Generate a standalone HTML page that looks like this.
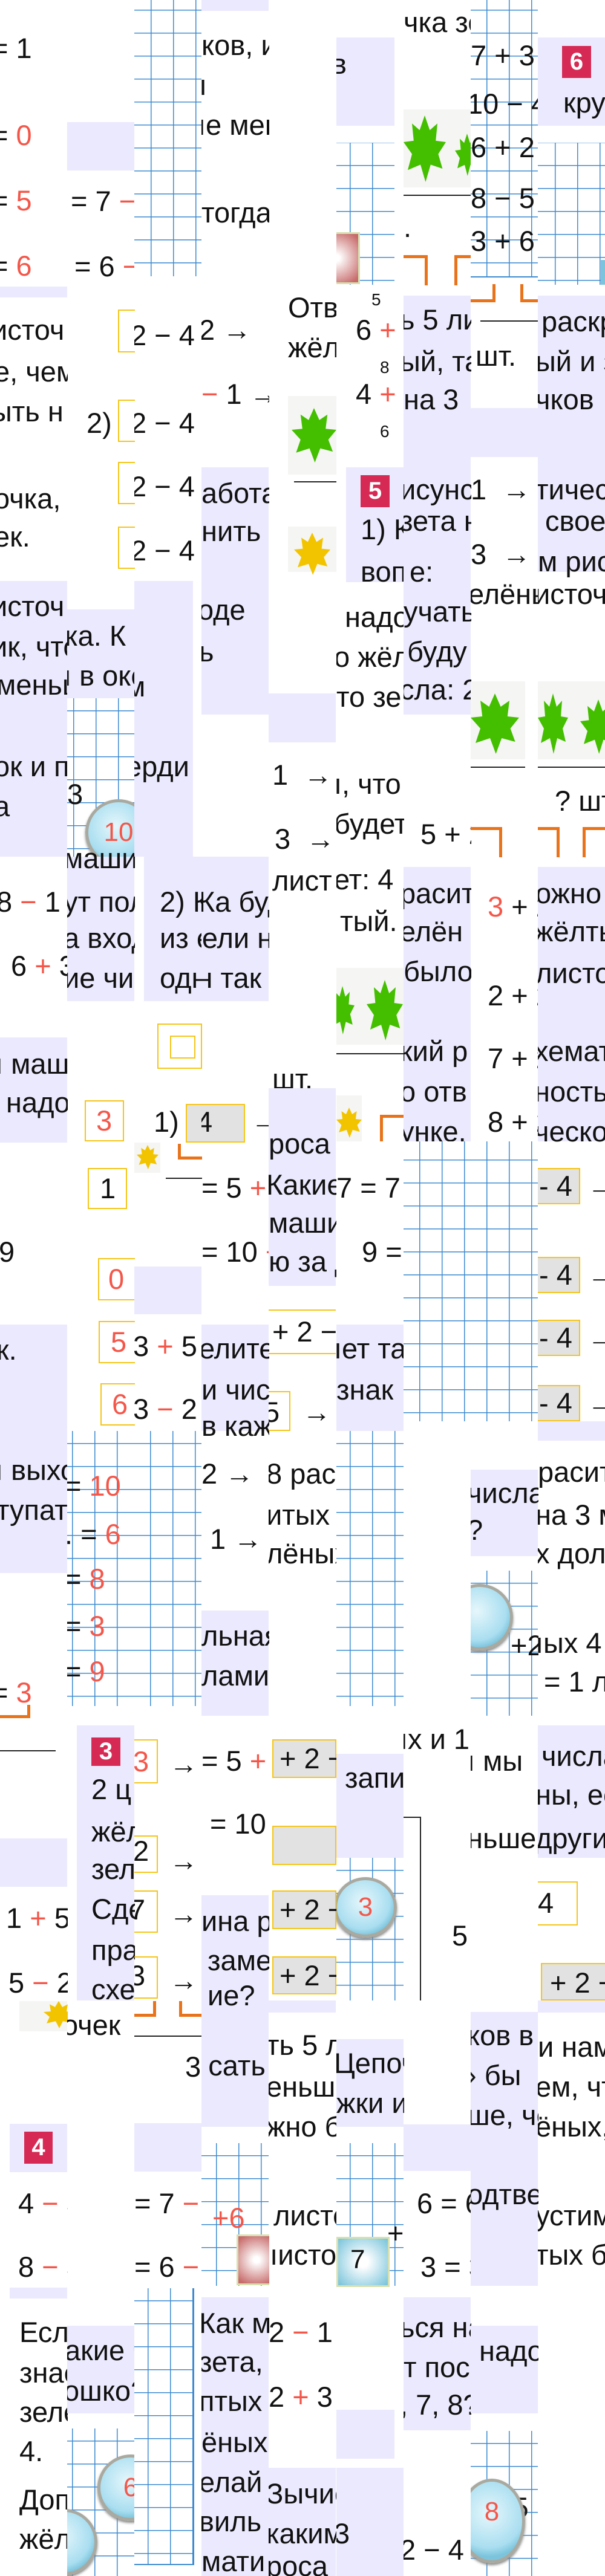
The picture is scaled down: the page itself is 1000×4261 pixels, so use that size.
<!DOCTYPE html>
<html><head><meta charset="utf-8">
<style>
html,body{margin:0;padding:0;background:#fff;}
body{width:1000px;height:4261px;position:relative;overflow:hidden;font-family:"Liberation Sans","DejaVu Sans",sans-serif;}
.c{position:absolute;top:0;width:112px;height:4261px;overflow:hidden;}
.c>*{position:absolute;}
.t{font-size:47px;line-height:52px;white-space:nowrap;color:#111;}
.r{color:#f4574a;}
.L{background:#ebe9fd;}
.g{background-color:#fff;background-image:linear-gradient(#3d8bd0 1.5px,transparent 1.5px),linear-gradient(90deg,#3d8bd0 1.5px,transparent 1.5px);background-size:37px 38px;}
.bx{border:2px solid #f5c518;box-sizing:border-box;}
.gb{background:#e2e2e2;border:2px solid #f5c518;box-sizing:border-box;}
.bd{background:#d62a55;color:#fff;font-size:40px;font-weight:bold;text-align:center;line-height:58px;width:48px;height:58px;}
.ob{border:5px solid #e8731a;box-sizing:border-box;}
.mg{width:110px;height:110px;border-radius:50%;background:radial-gradient(circle at 45% 40%,#e6f7fc 0,#a9def0 60%,#7cc4dc 75%);border:5px solid #a9a9a0;box-shadow:0 3px 4px #888;box-sizing:border-box;color:#f4574a;font-size:44px;line-height:100px;text-align:center;}
.lf{background:#f5f5f3;}
.lf i{position:absolute;background:#44bf00;clip-path:polygon(50% 0,62% 22%,80% 12%,76% 38%,100% 40%,82% 58%,92% 80%,64% 74%,52% 100%,40% 74%,10% 82%,20% 58%,0 40%,24% 38%,20% 12%,38% 22%);}
.ly i{background:#f2c400;}
.ln{border-top:2px solid #222;height:0;}
</style></head><body>

<!-- COLUMN 0 -->
<div class="c" style="left:0">
 <div class="t" style="left:-14px;top:54px">= 1</div>
 <div class="t" style="left:-14px;top:198px">= <span class="r">0</span></div>
 <div class="t" style="left:-14px;top:306px">= <span class="r">5</span></div>
 <div class="t" style="left:-14px;top:414px">= <span class="r">6</span></div>
 <div class="L" style="left:0;top:474px;width:111px;height:18px"></div>
 <div class="t" style="left:-14px;top:520px">источ</div>
 <div class="t" style="left:-10px;top:589px">е, чем</div>
 <div class="t" style="left:-14px;top:655px">ыть н</div>
 <div class="t" style="left:-10px;top:799px">очка,</div>
 <div class="t" style="left:-10px;top:862px">ек.</div>
 <div class="L" style="left:0;top:961px;width:111px;height:456px"></div>
 <div class="t" style="left:-14px;top:977px">источ</div>
 <div class="t" style="left:-14px;top:1044px">ик, что</div>
 <div class="t" style="left:-6px;top:1107px">меньш</div>
 <div class="t" style="left:-10px;top:1242px">ок и п</div>
 <div class="t" style="left:-10px;top:1308px">а</div>
 <div class="t" style="left:-6px;top:1466px">8 <span class="r">−</span> 1</div>
 <div class="t" style="left:18px;top:1572px">6 <span class="r">+</span> 3</div>
 <div class="L" style="left:0;top:1716px;width:111px;height:174px"></div>
 <div class="t" style="left:-8px;top:1734px">ı маш</div>
 <div class="t" style="left:10px;top:1798px">надо</div>
 <div class="t" style="left:-2px;top:2045px">9</div>
 <div class="L" style="left:0;top:2191px;width:111px;height:411px"></div>
 <div class="t" style="left:-6px;top:2207px">к.</div>
 <div class="t" style="left:-8px;top:2406px">ı выхо</div>
 <div class="t" style="left:-6px;top:2472px">тупат</div>
 <div class="t" style="left:-14px;top:2774px">= <span class="r">3</span></div>
 <div class="ob" style="left:-4px;top:2820px;width:54px;height:22px;border-top:none;border-left:none"></div>
 <div class="ln" style="left:0;top:2895px;width:92px"></div>
 <div class="L" style="left:0;top:3041px;width:111px;height:80px"></div>
 <div class="t" style="left:10px;top:3147px">1 <span class="r">+</span> 5</div>
 <div class="t" style="left:14px;top:3254px">5 <span class="r">−</span> 2</div>
 <div class="lf ly" style="left:32px;top:3310px;width:79px;height:50px"><i style="left:40px;top:0;width:50px;height:45px"></i></div>
 <div class="L" style="left:16px;top:3513px;width:95px;height:80px"></div>
 <div class="bd" style="left:40px;top:3526px;width:47px;height:53px;line-height:53px">4</div>
 <div class="t" style="left:30px;top:3619px">4 <span class="r">−</span> 3</div>
 <div class="t" style="left:30px;top:3724px">8 <span class="r">−</span> 3</div>
 <div class="L" style="left:16px;top:3784px;width:95px;height:18px"></div>
 <div class="t" style="left:32px;top:3832px">Если</div>
 <div class="t" style="left:32px;top:3899px">знае</div>
 <div class="t" style="left:32px;top:3964px">зеле</div>
 <div class="t" style="left:32px;top:4029px">4.</div>
 <div class="t" style="left:32px;top:4109px">Доп</div>
 <div class="t" style="left:32px;top:4174px">жёл</div>
</div>

<!-- COLUMN 1 -->
<div class="c" style="left:111px">
 <div class="L" style="left:0;top:202px;width:111px;height:80px"></div>
 <div class="t" style="left:6px;top:307px">= 7 <span class="r">−</span></div>
 <div class="t" style="left:12px;top:415px">= 6 <span class="r">−</span></div>
 <div class="bx" style="left:84px;top:512px;width:40px;height:71px"></div>
 <div class="t" style="left:32px;top:674px">2)</div>
 <div class="bx" style="left:84px;top:661px;width:40px;height:70px"></div>
 <div class="bx" style="left:84px;top:764px;width:40px;height:70px"></div>
 <div class="bx" style="left:84px;top:871px;width:40px;height:70px"></div>
 <div class="L" style="left:0;top:1008px;width:111px;height:147px"></div>
 <div class="t" style="left:-4px;top:1026px">ка. К</div>
 <div class="t" style="left:-6px;top:1092px">ı в око</div>
 <div class="g" style="left:0;top:1155px;width:111px;height:262px;background-position:10px 20px"></div>
 <div class="t" style="left:0;top:1288px">3</div>
 <div class="mg" style="left:30px;top:1322px">10</div>
 <div class="L" style="left:0;top:1417px;width:111px;height:239px"></div>
 <div class="t" style="left:-6px;top:1394px">маши</div>
 <div class="t" style="left:-6px;top:1466px">ут пол</div>
 <div class="t" style="left:-6px;top:1526px">а вход</div>
 <div class="t" style="left:-6px;top:1592px">ие чи</div>
 <div class="bx" style="left:29px;top:1820px;width:65px;height:68px"></div><div class="t r" style="left:48px;top:1828px">3</div>
 <div class="bx" style="left:34px;top:1932px;width:65px;height:68px"></div><div class="t" style="left:54px;top:1940px">1</div>
 <div class="bx" style="left:51px;top:2081px;width:70px;height:70px"></div><div class="t r" style="left:68px;top:2090px">0</div>
 <div class="bx" style="left:52px;top:2185px;width:70px;height:70px"></div><div class="t r" style="left:72px;top:2194px">5</div>
 <div class="bx" style="left:55px;top:2288px;width:70px;height:70px"></div><div class="t r" style="left:74px;top:2297px">6</div>
 <div class="g" style="left:0;top:2367px;width:111px;height:455px;background-position:8px 20px"></div>
 <div class="t" style="left:-4px;top:2432px">= <span class="r">10</span></div>
 <div class="t" style="left:-4px;top:2512px">. = <span class="r">6</span></div>
 <div class="t" style="left:-4px;top:2586px">= <span class="r">8</span></div>
 <div class="t" style="left:-4px;top:2664px">= <span class="r">3</span></div>
 <div class="t" style="left:-4px;top:2739px">= <span class="r">9</span></div>
 <div class="L" style="left:16px;top:2854px;width:95px;height:455px"></div>
 <div class="bd" style="left:40px;top:2874px;height:47px;line-height:47px">3</div>
 <div class="t" style="left:40px;top:2934px">2 ц</div>
 <div class="t" style="left:40px;top:3004px">жёл</div>
 <div class="t" style="left:40px;top:3066px">зел</div>
 <div class="t" style="left:40px;top:3132px">Сде</div>
 <div class="t" style="left:40px;top:3200px">пра</div>
 <div class="t" style="left:40px;top:3265px">схе</div>
 <div class="t" style="left:-8px;top:3324px">очек</div>
 <div class="L" style="left:0;top:3847px;width:111px;height:145px"></div>
 <div class="t" style="left:-4px;top:3862px">акие ч</div>
 <div class="t" style="left:-6px;top:3929px">ошко?</div>
 <div class="g" style="left:0;top:4017px;width:111px;height:244px;background-position:8px 20px"></div>
 <div class="mg" style="left:50px;top:4060px">6</div>
 <div class="mg" style="left:-60px;top:4150px"></div>
</div>

<!-- COLUMN 2 -->
<div class="c" style="left:222px">
 <div class="g" style="left:0;top:0;width:111px;height:457px;background-position:27px 16px"></div>
 <div class="t" style="left:-6px;top:529px">2 − 4 =</div>
 <div class="t" style="left:-6px;top:674px">2 − 4 =</div>
 <div class="t" style="left:-6px;top:779px">2 − 4 =</div>
 <div class="t" style="left:-6px;top:885px">2 − 4 =</div>
 <div class="L" style="left:0;top:961px;width:97px;height:456px"></div>
 <div class="t" style="left:-14px;top:1110px">м</div>
 <div class="t" style="left:-14px;top:1242px">ерди</div>
 <div class="L" style="left:16px;top:1417px;width:96px;height:239px"></div>
 <div class="t" style="left:42px;top:1466px">2) К</div>
 <div class="t" style="left:42px;top:1526px">из е</div>
 <div class="t" style="left:42px;top:1592px">одн</div>
 <div class="bx" style="left:38px;top:1693px;width:74px;height:75px"></div>
 <div class="bx" style="left:59px;top:1713px;width:42px;height:38px"></div>
 <div class="t" style="left:32px;top:1830px">1)</div>
 <div class="gb" style="left:85px;top:1826px;width:40px;height:64px"></div>
 <div class="lf ly" style="left:0;top:1890px;width:43px;height:50px"><i style="left:4px;top:4px;width:36px;height:40px"></i></div>
 <div class="ob" style="left:72px;top:1892px;width:40px;height:26px;border-top:none;border-right:none"></div>
 <div class="ln" style="left:52px;top:1948px;width:60px"></div>
 <div class="L" style="left:0;top:2095px;width:111px;height:79px"></div>
 <div class="t" style="left:-2px;top:2201px">3 <span class="r">+</span> 5</div>
 <div class="t" style="left:-2px;top:2305px">3 <span class="r">−</span> 2</div>
 <div class="g" style="left:0;top:2367px;width:111px;height:455px;background-position:26px 20px"></div>
 <div class="bx" style="left:-4px;top:2877px;width:43px;height:73px"></div><div class="t r" style="left:-2px;top:2888px">3</div>
 <div class="t" style="left:58px;top:2892px">→</div>
 <div class="bx" style="left:-4px;top:3036px;width:43px;height:62px"></div><div class="t" style="left:-2px;top:3036px">2</div>
 <div class="t" style="left:58px;top:3052px">→</div>
 <div class="bx" style="left:-4px;top:3127px;width:43px;height:70px"></div><div class="t" style="left:-8px;top:3133px">7</div>
 <div class="t" style="left:58px;top:3140px">→</div>
 <div class="bx" style="left:-4px;top:3236px;width:43px;height:70px"></div><div class="t" style="left:-8px;top:3242px">3</div>
 <div class="t" style="left:58px;top:3250px">→</div>
 <div class="ob" style="left:-4px;top:3310px;width:40px;height:26px;border-top:none;border-left:none"></div>
 <div class="ob" style="left:74px;top:3310px;width:40px;height:26px;border-top:none;border-right:none"></div>
 <div class="ln" style="left:0;top:3367px;width:111px"></div>
 <div class="t" style="left:84px;top:3393px">3</div>
 <div class="L" style="left:0;top:3512px;width:111px;height:80px"></div>
 <div class="t" style="left:0;top:3619px">= 7 <span class="r">−</span> 1</div>
 <div class="t" style="left:0;top:3724px">= 6 <span class="r">−</span> 3</div>
 <div class="g" style="left:0;top:3785px;width:97px;height:456px;background-position:22px 20px;border-bottom:2px solid #3d8bd0;border-right:2px solid #3d8bd0"></div>
</div>

<!-- COLUMN 3 -->
<div class="c" style="left:333px">
 <div class="L" style="left:0;top:0;width:111px;height:18px"></div>
 <div class="t" style="left:0;top:49px">ков, и</div>
 <div class="t" style="left:-4px;top:115px">ı</div>
 <div class="t" style="left:-6px;top:181px">ıе мен</div>
 <div class="t" style="left:0;top:326px">тогда</div>
 <div class="t" style="left:-4px;top:520px">2 →</div>
 <div class="t" style="left:0;top:626px"><span class="r">−</span> 1 →</div>
 <div class="L" style="left:0;top:773px;width:111px;height:409px"></div>
 <div class="t" style="left:0;top:790px">абота</div>
 <div class="t" style="left:0;top:853px">нить</div>
 <div class="t" style="left:-6px;top:983px">оде</div>
 <div class="t" style="left:-4px;top:1052px">ь</div>
 <div class="L" style="left:0;top:1417px;width:111px;height:239px"></div>
 <div class="t" style="left:-60px;top:1466px">2) Ка буду</div>
 <div class="t" style="left:-60px;top:1526px">из ели на</div>
 <div class="t" style="left:-60px;top:1592px">одн так</div>
 <div class="gb" style="left:-28px;top:1826px;width:100px;height:64px"></div>
 <div class="t" style="left:-8px;top:1830px">4</div>
 <div class="t" style="left:82px;top:1828px">→</div>
 <div class="t" style="left:0;top:1939px">= 5 <span class="r">+</span> 2</div>
 <div class="t" style="left:0;top:2045px">= 10 <span class="r">−</span></div>
 <div class="L" style="left:0;top:2191px;width:111px;height:176px"></div>
 <div class="t" style="left:-4px;top:2205px">елител</div>
 <div class="t" style="left:0;top:2273px">и чис</div>
 <div class="t" style="left:0;top:2333px">в каж</div>
 <div class="t" style="left:0;top:2412px">2 →</div>
 <div class="t" style="left:14px;top:2520px">1 →</div>
 <div class="L" style="left:0;top:2664px;width:111px;height:174px"></div>
 <div class="t" style="left:0;top:2680px">льная</div>
 <div class="t" style="left:0;top:2746px">лами</div>
 <div class="t" style="left:0;top:2887px">= 5 <span class="r">+</span> 2</div>
 <div class="t" style="left:14px;top:2991px">= 10</div>
 <div class="L" style="left:0;top:3135px;width:111px;height:383px"></div>
 <div class="t" style="left:0;top:3152px">ина р</div>
 <div class="t" style="left:10px;top:3217px">заме</div>
 <div class="t" style="left:10px;top:3275px">ие?</div>
 <div class="t" style="left:-28px;top:3391px">3 сать</div>
 <div class="g" style="left:0;top:3545px;width:111px;height:236px;background-position:24px 20px"></div>
 <div class="t r" style="left:18px;top:3643px">+6</div>
 <div class="lf" style="left:58px;top:3696px;width:60px;height:78px;background:radial-gradient(circle,#fff 10%,#c76a6a 90%);border:3px solid #d8e0b0"></div>
 <div class="L" style="left:0;top:3800px;width:111px;height:461px"></div>
 <div class="t" style="left:-4px;top:3817px">Как м</div>
 <div class="t" style="left:-4px;top:3881px">зета,</div>
 <div class="t" style="left:-4px;top:3946px">птых</div>
 <div class="t" style="left:0;top:4014px">ёных</div>
 <div class="t" style="left:-4px;top:4080px">елай</div>
 <div class="t" style="left:-4px;top:4145px">виль</div>
 <div class="t" style="left:0;top:4211px">мати</div>
</div>

<!-- COLUMN 4 -->
<div class="c" style="left:444px">
 <div class="t" style="left:32px;top:483px">Отв</div>
 <div class="t" style="left:32px;top:549px">жёл</div>
 <div class="lf" style="left:32px;top:655px;width:80px;height:130px"><i style="left:6px;top:20px;width:74px;height:90px"></i></div>
 <div class="ln" style="left:42px;top:796px;width:70px"></div>
 <div class="lf ly" style="left:32px;top:871px;width:80px;height:75px"><i style="left:10px;top:10px;width:60px;height:70px"></i></div>
 <div class="L" style="left:0;top:1147px;width:111px;height:81px"></div>
 <div class="t" style="left:6px;top:1256px">1 &nbsp;→</div>
 <div class="t" style="left:10px;top:1362px">3 &nbsp;→</div>
 <div class="t" style="left:6px;top:1431px">лист</div>
 <div class="t" style="left:6px;top:1759px">шт.</div>
 <div class="L" style="left:0;top:1800px;width:111px;height:327px"></div>
 <div class="t" style="left:0;top:1866px">роса</div>
 <div class="t" style="left:-4px;top:1934px">Какие</div>
 <div class="t" style="left:0;top:1997px">маши</div>
 <div class="t" style="left:0;top:2061px">ю за д</div>
 <div class="ln" style="left:0;top:2166px;width:111px;border-color:#f5c518"></div>
 <div class="t" style="left:6px;top:2177px">+ 2 −</div>
 <div class="ln" style="left:0;top:2238px;width:111px;border-color:#f5c518"></div>
 <div class="bx" style="left:-4px;top:2301px;width:40px;height:66px"></div><div class="t" style="left:-8px;top:2310px">5</div>
 <div class="t" style="left:56px;top:2310px">→</div>
 <div class="t" style="left:-4px;top:2412px">8 раск</div>
 <div class="t" style="left:-4px;top:2480px">итых н</div>
 <div class="t" style="left:-4px;top:2544px">лёных</div>
 <div class="gb" style="left:6px;top:2877px;width:106px;height:64px"></div>
 <div class="t" style="left:18px;top:2883px">+ 2 −</div>
 <div class="gb" style="left:6px;top:3020px;width:106px;height:65px"></div>
 <div class="gb" style="left:6px;top:3127px;width:106px;height:64px"></div><div class="t" style="left:18px;top:3133px">+ 2 −</div>
 <div class="gb" style="left:6px;top:3236px;width:106px;height:63px"></div><div class="t" style="left:18px;top:3242px">+ 2 −</div>
 <div class="L" style="left:0;top:3309px;width:111px;height:20px"></div>
 <div class="t" style="left:-4px;top:3357px">ть 5 ли</div>
 <div class="t" style="left:-4px;top:3426px">еньш</div>
 <div class="t" style="left:-4px;top:3492px">жно б</div>
 <div class="t" style="left:8px;top:3639px">листо</div>
 <div class="t" style="left:-24px;top:3704px">9ıисточ</div>
 <div class="t" style="left:0;top:3832px">2 <span class="r">−</span> 1 =</div>
 <div class="t" style="left:0;top:3939px">2 <span class="r">+</span> 3 =</div>
 <div class="L" style="left:0;top:4082px;width:111px;height:179px"></div>
 <div class="t" style="left:-4px;top:4099px">Зычио</div>
 <div class="t" style="left:-4px;top:4165px">каким</div>
 <div class="t" style="left:-4px;top:4219px">роса</div>
</div>

<!-- COLUMN 5 -->
<div class="c" style="left:556px">
 <div class="L" style="left:0;top:62px;width:96px;height:146px"></div>
 <div class="t" style="left:-8px;top:80px">в</div>
 <div class="g" style="left:0;top:236px;width:96px;height:235px;background-position:22px 37px"></div>
 <div class="lf" style="left:0;top:384px;width:36px;height:80px;background:radial-gradient(circle at 0 50%,#fff 10%,#c76a6a 90%);border:3px solid #d8e0b0;border-left:none"></div>
 <div class="t" style="left:58px;top:470px;font-size:28px">5</div>
 <div class="t" style="left:32px;top:520px">6 <span class="r">+</span> 2</div>
 <div class="t" style="left:72px;top:582px;font-size:28px">8</div>
 <div class="t" style="left:32px;top:626px">4 <span class="r">+</span> 2</div>
 <div class="t" style="left:72px;top:688px;font-size:28px">6</div>
 <div class="L" style="left:16px;top:773px;width:96px;height:190px"></div>
 <div class="bd" style="left:40px;top:786px;height:53px;line-height:53px">5</div>
 <div class="t" style="left:40px;top:850px">1) К</div>
 <div class="t" style="left:40px;top:920px">вопр</div>
 <div class="t" style="left:14px;top:995px">надо</div>
 <div class="t" style="left:-4px;top:1061px">о жёл</div>
 <div class="t" style="left:0;top:1127px">то зе</div>
 <div class="t" style="left:-4px;top:1271px">ı, что</div>
 <div class="t" style="left:-4px;top:1337px">будет:</div>
 <div class="t" style="left:-4px;top:1429px">ет: 4</div>
 <div class="t" style="left:6px;top:1498px">тый.</div>
 <div class="lf" style="left:0;top:1601px;width:111px;height:127px"><i style="left:50px;top:20px;width:60px;height:100px"></i><i style="left:-10px;top:30px;width:40px;height:80px"></i></div>
 <div class="ln" style="left:0;top:1742px;width:111px"></div>
 <div class="lf ly" style="left:0;top:1812px;width:42px;height:76px"><i style="left:0;top:20px;width:42px;height:50px"></i></div>
 <div class="ob" style="left:72px;top:1844px;width:40px;height:44px;border-bottom:none;border-right:none"></div>
 <div class="t" style="left:0;top:1939px">7 = 7</div>
 <div class="t" style="left:42px;top:2045px">9 =</div>
 <div class="L" style="left:0;top:2191px;width:111px;height:176px"></div>
 <div class="t" style="left:-4px;top:2205px">ıет та</div>
 <div class="t" style="left:0;top:2273px">знак</div>
 <div class="g" style="left:0;top:2367px;width:111px;height:455px;background-position:22px 20px"></div>
 <div class="L" style="left:0;top:2901px;width:111px;height:172px"></div>
 <div class="t" style="left:14px;top:2915px">запи</div>
 <div class="g" style="left:0;top:3073px;width:111px;height:236px;background-position:22px 20px"></div>
 <div class="mg" style="left:-4px;top:3105px;width:104px;height:100px;line-height:90px">3</div>
 <div class="L" style="left:0;top:3373px;width:111px;height:145px"></div>
 <div class="t" style="left:-4px;top:3387px">Цепоч</div>
 <div class="t" style="left:0;top:3453px">жки и</div>
 <div class="g" style="left:0;top:3545px;width:111px;height:236px;background-position:22px 20px"></div>
 <div class="t" style="left:84px;top:3668px">+</div>
 <div class="lf" style="left:0;top:3700px;width:82px;height:77px;background:radial-gradient(circle,#fff 15%,#7dc6dc 95%);border:3px solid #d8e0b0;color:#111;font-size:44px;line-height:70px;text-indent:20px">7</div>
 <div class="L" style="left:0;top:3986px;width:96px;height:81px"></div>
 <div class="L" style="left:0;top:4082px;width:111px;height:179px"></div>
 <div class="t" style="left:-4px;top:4165px">3</div>
</div>

<!-- COLUMN 6 -->
<div class="c" style="left:667px">
 <div class="t" style="left:0;top:11px">чка зе</div>
 <div class="lf" style="left:0;top:181px;width:111px;height:129px"><i style="left:0;top:10px;width:70px;height:110px"></i><i style="left:85px;top:40px;width:40px;height:70px"></i></div>
 <div class="ln" style="left:0;top:322px;width:111px"></div>
 <div class="t" style="left:0;top:350px">.</div>
 <div class="ob" style="left:0;top:422px;width:40px;height:50px;border-bottom:none;border-left:none"></div>
 <div class="ob" style="left:84px;top:422px;width:40px;height:50px;border-bottom:none;border-right:none"></div>
 <div class="L" style="left:0;top:489px;width:111px;height:693px"></div>
 <div class="t" style="left:-6px;top:503px">ь 5 ли</div>
 <div class="t" style="left:-6px;top:572px">ый, та</div>
 <div class="t" style="left:0;top:635px">на 3</div>
 <div class="t" style="left:-6px;top:784px">исунс</div>
 <div class="t" style="left:-6px;top:836px">зета н</div>
 <div class="t" style="left:10px;top:920px">е:</div>
 <div class="t" style="left:0;top:986px">учать</div>
 <div class="t" style="left:6px;top:1052px">буду</div>
 <div class="t" style="left:-6px;top:1115px">сла: 2</div>
 <div class="t" style="left:28px;top:1354px">5 + 2</div>
 <div class="L" style="left:0;top:1434px;width:111px;height:454px"></div>
 <div class="t" style="left:-6px;top:1452px">расит</div>
 <div class="t" style="left:-6px;top:1515px">елён</div>
 <div class="t" style="left:0;top:1581px">было</div>
 <div class="t" style="left:-6px;top:1713px">кий р</div>
 <div class="t" style="left:-6px;top:1780px">о отв</div>
 <div class="t" style="left:-6px;top:1846px">унке.</div>
 <div class="g" style="left:0;top:1888px;width:111px;height:463px;background-position:26px 30px"></div>
 <div class="t" style="left:-6px;top:2851px">ıх и 1</div>
 <div class="ln" style="left:0;top:3005px;width:28px"></div>
 <div style="left:27px;top:3005px;width:2px;height:304px;background:#222"></div>
 <div class="t" style="left:80px;top:3176px">5</div>
 <div class="L" style="left:0;top:3514px;width:111px;height:77px"></div>
 <div class="t" style="left:22px;top:3619px">6 = 6</div>
 <div class="t" style="left:28px;top:3724px">3 = 3</div>
 <div class="L" style="left:0;top:3800px;width:111px;height:220px"></div>
 <div class="t" style="left:-6px;top:3824px">ься на</div>
 <div class="t" style="left:0;top:3890px">т пос</div>
 <div class="t" style="left:-6px;top:3952px">, 7, 8?</div>
 <div class="t" style="left:-6px;top:4192px">2 − 4 =</div>
</div>

<!-- COLUMN 7 -->
<div class="c" style="left:778px">
 <div class="g" style="left:0;top:0;width:111px;height:457px;background-position:26px 16px;border-bottom:2px solid #3d8bd0"></div>
 <div class="t" style="left:0;top:66px">7 + 3 =</div>
 <div class="t" style="left:-6px;top:146px">10 − 4</div>
 <div class="t" style="left:0;top:218px">6 + 2 =</div>
 <div class="t" style="left:0;top:302px">8 − 5</div>
 <div class="t" style="left:0;top:373px">3 + 6 =</div>
 <div class="ob" style="left:-4px;top:470px;width:45px;height:30px;border-top:none;border-left:none"></div>
 <div class="ob" style="left:82px;top:470px;width:40px;height:30px;border-top:none;border-right:none"></div>
 <div class="ln" style="left:16px;top:530px;width:95px"></div>
 <div class="t" style="left:8px;top:563px">шт.</div>
 <div class="L" style="left:0;top:675px;width:111px;height:81px"></div>
 <div class="t" style="left:0;top:784px">1 &nbsp;→</div>
 <div class="t" style="left:0;top:891px">3 &nbsp;→</div>
 <div class="t" style="left:-4px;top:957px">елёны</div>
 <div class="lf" style="left:0;top:1127px;width:90px;height:129px"><i style="left:0;top:20px;width:80px;height:100px"></i></div>
 <div class="ln" style="left:0;top:1268px;width:90px"></div>
 <div class="ob" style="left:-4px;top:1368px;width:56px;height:50px;border-bottom:none;border-left:none"></div>
 <div class="t" style="left:28px;top:1474px"><span class="r">3</span> + 2</div>
 <div class="t" style="left:28px;top:1621px">2 + 2</div>
 <div class="t" style="left:28px;top:1725px">7 + 2</div>
 <div class="t" style="left:28px;top:1830px">8 + 2</div>
 <div class="g" style="left:0;top:1888px;width:111px;height:463px;background-position:26px 30px"></div>
 <div class="L" style="left:0;top:2431px;width:111px;height:143px"></div>
 <div class="t" style="left:-6px;top:2444px">числа</div>
 <div class="t" style="left:-6px;top:2505px">?</div>
 <div class="g" style="left:0;top:2598px;width:111px;height:240px;background-position:26px 20px"></div>
 <div class="mg" style="left:-40px;top:2620px"></div>
 <div class="t" style="left:66px;top:2696px">+2</div>
 <div class="t" style="left:-6px;top:2887px">ı мы</div>
 <div class="t" style="left:-6px;top:3015px">ньше</div>
 <div class="L" style="left:0;top:3328px;width:111px;height:453px"></div>
 <div class="t" style="left:-6px;top:3341px">ков в</div>
 <div class="t" style="left:-6px;top:3407px">› бы</div>
 <div class="t" style="left:-6px;top:3473px">ше, че</div>
 <div class="t" style="left:-6px;top:3604px">одтве</div>
 <div class="L" style="left:0;top:3847px;width:111px;height:145px"></div>
 <div class="t" style="left:14px;top:3863px">надо</div>
 <div class="g" style="left:0;top:4021px;width:111px;height:240px;background-position:26px 20px"></div>
 <div class="t" style="left:42px;top:4122px">−5</div>
 <div class="mg" style="left:-20px;top:4100px;width:110px;height:140px">8</div>
</div>

<!-- COLUMN 8 -->
<div class="c" style="left:889px">
 <div class="L" style="left:0;top:62px;width:111px;height:146px"></div>
 <div class="bd" style="left:40px;top:76px;height:53px;line-height:53px">6</div>
 <div class="t" style="left:42px;top:144px">кру</div>
 <div class="g" style="left:0;top:236px;width:111px;height:235px;background-position:28px 37px"></div>
 <div style="left:104px;top:430px;width:8px;height:41px;background:#7cc4dc"></div>
 <div class="L" style="left:0;top:489px;width:111px;height:457px"></div>
 <div class="t" style="left:6px;top:506px">раскр</div>
 <div class="t" style="left:-4px;top:572px">ый и з</div>
 <div class="t" style="left:-4px;top:635px">чков</div>
 <div class="t" style="left:-4px;top:784px">тичес</div>
 <div class="t" style="left:12px;top:836px">свое</div>
 <div class="t" style="left:0;top:903px">м рис</div>
 <div class="t" style="left:-6px;top:957px">источ</div>
 <div class="lf" style="left:0;top:1127px;width:111px;height:129px"><i style="left:0;top:20px;width:50px;height:100px"></i><i style="left:70px;top:30px;width:60px;height:90px"></i></div>
 <div class="ln" style="left:0;top:1268px;width:111px"></div>
 <div class="t" style="left:28px;top:1299px">? шт</div>
 <div class="ob" style="left:-4px;top:1368px;width:40px;height:50px;border-bottom:none;border-left:none"></div>
 <div class="ob" style="left:74px;top:1368px;width:40px;height:50px;border-bottom:none;border-right:none"></div>
 <div class="L" style="left:0;top:1434px;width:111px;height:454px"></div>
 <div class="t" style="left:-4px;top:1452px">ожно</div>
 <div class="t" style="left:-6px;top:1515px">жёлты</div>
 <div class="t" style="left:-4px;top:1584px">листо</div>
 <div class="t" style="left:-6px;top:1713px">хемат</div>
 <div class="t" style="left:-6px;top:1780px">ность</div>
 <div class="t" style="left:-6px;top:1846px">ческо</div>
 <div class="gb" style="left:-4px;top:1932px;width:74px;height:60px"></div><div class="t" style="left:2px;top:1936px">- 4</div><div class="t" style="left:82px;top:1936px">→</div>
 <div class="gb" style="left:-4px;top:2079px;width:74px;height:60px"></div><div class="t" style="left:2px;top:2083px">- 4</div><div class="t" style="left:82px;top:2083px">→</div>
 <div class="gb" style="left:-4px;top:2183px;width:74px;height:60px"></div><div class="t" style="left:2px;top:2187px">- 4</div><div class="t" style="left:82px;top:2187px">→</div>
 <div class="gb" style="left:-4px;top:2291px;width:74px;height:60px"></div><div class="t" style="left:2px;top:2295px">- 4</div><div class="t" style="left:82px;top:2295px">→</div>
 <div class="L" style="left:0;top:2351px;width:111px;height:32px"></div>
 <div class="t" style="left:0;top:2409px">расит</div>
 <div class="t" style="left:-4px;top:2480px">на 3 м</div>
 <div class="t" style="left:-4px;top:2544px">х долж</div>
 <div class="t" style="left:-4px;top:2692px">ıых 4</div>
 <div class="t" style="left:10px;top:2756px">= 1 л</div>
 <div class="L" style="left:0;top:2854px;width:111px;height:219px"></div>
 <div class="t" style="left:6px;top:2879px">числа</div>
 <div class="t" style="left:-4px;top:2943px">ны, ес</div>
 <div class="t" style="left:-4px;top:3015px">други</div>
 <div class="bx" style="left:-4px;top:3112px;width:70px;height:73px"></div><div class="t" style="left:0;top:3122px">4</div>
 <div class="gb" style="left:5px;top:3247px;width:110px;height:62px"></div><div class="t" style="left:20px;top:3254px">+ 2 −</div>
 <div class="L" style="left:0;top:3309px;width:111px;height:20px"></div>
 <div class="t" style="left:0;top:3360px">и нам</div>
 <div class="t" style="left:-4px;top:3426px">ем, чт</div>
 <div class="t" style="left:-4px;top:3492px">ёных,</div>
 <div class="t" style="left:-4px;top:3639px">устим</div>
 <div class="t" style="left:-4px;top:3704px">тых б</div>
</div>

</body></html>
